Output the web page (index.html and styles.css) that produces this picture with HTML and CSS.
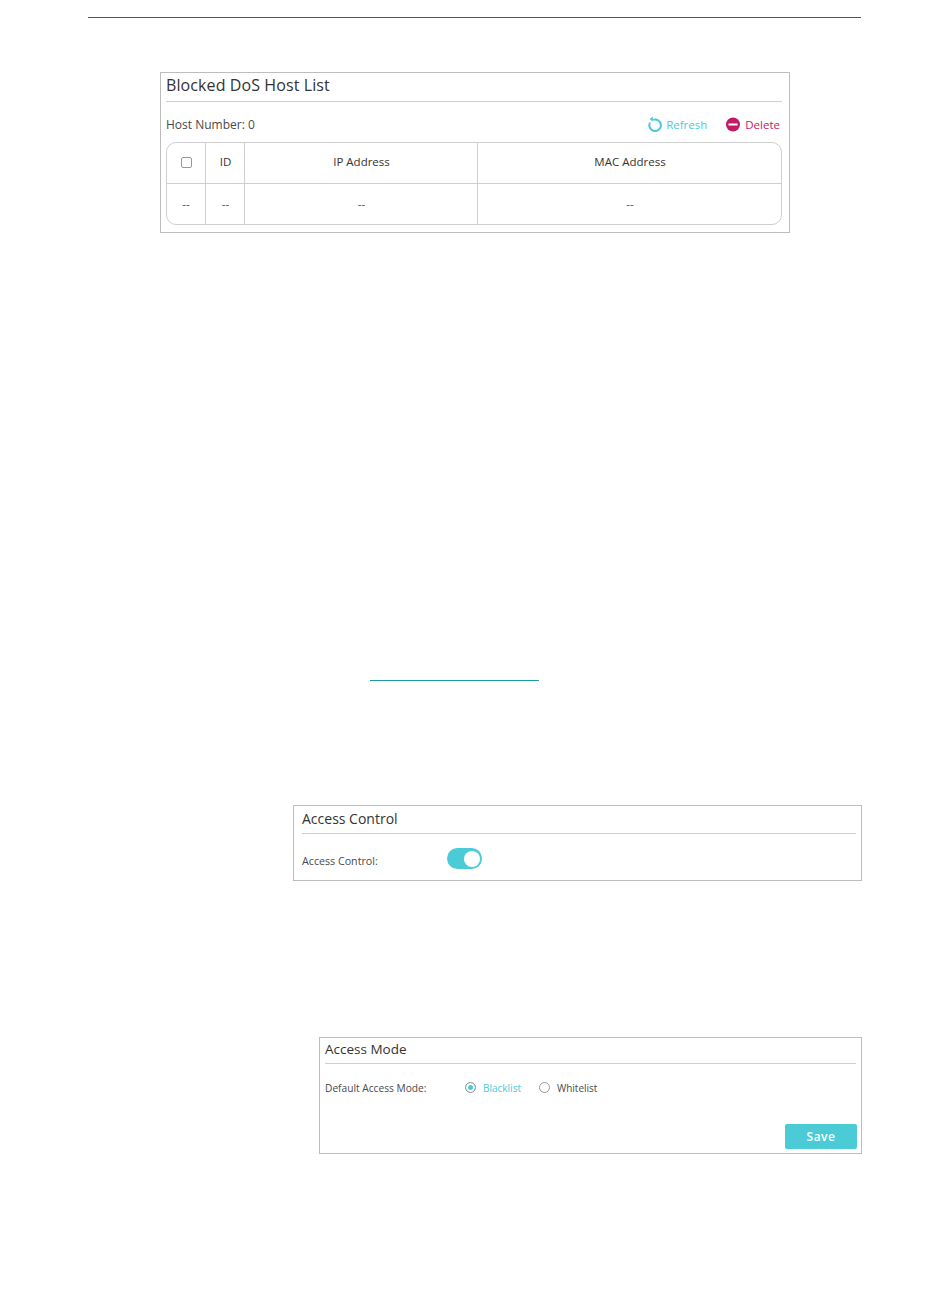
FILE: index.html
```html
<!DOCTYPE html>
<html>
<head>
    <title>Blocked DoS Host List</title>
    <link rel="stylesheet" href="styles.css">
</head>
<body>
    <div class="page-rule"></div>

    <div class="panel panel-hosts">
        <div class="panel-title">Blocked DoS Host List</div>
        <div class="toolbar">
            <span class="host-number">Host Number: 0</span>
            <div class="actions">
                <span class="action refresh">
                    <svg width="14" height="16" viewBox="0 0 14 16">
                        <path d="M5 3.9 A5.8 5.8 0 1 1 2 6.6" fill="none" stroke="#4acbd6" stroke-width="2"/>
                        <path d="M4.8 0.5 L4.8 5.5 L1.5 3 Z" fill="#4acbd6"/>
                    </svg>
                    Refresh
                </span>
                <span class="action delete">
                    <svg width="14" height="15" viewBox="0 0 14 15">
                        <circle cx="7" cy="7.5" r="7" fill="#c21b65"/>
                        <rect x="2.5" y="6.5" width="9" height="2" fill="#fff"/>
                    </svg>
                    Delete
                </span>
            </div>
        </div>
        <div class="table-wrap">
            <div class="row row-head">
                <div class="cell"><span class="checkbox"></span></div>
                <div class="cell">ID</div>
                <div class="cell">IP Address</div>
                <div class="cell">MAC Address</div>
            </div>
            <div class="row">
                <div class="cell">--</div>
                <div class="cell">--</div>
                <div class="cell">--</div>
                <div class="cell">--</div>
            </div>
        </div>
    </div>

    <div class="link-rule"></div>

    <div class="panel panel-control">
        <div class="panel-title">Access Control</div>
        <div class="field">
            <span class="field-label">Access Control:</span>
            <span class="switch"><span class="knob"></span></span>
        </div>
    </div>

    <div class="panel panel-mode">
        <div class="panel-title">Access Mode</div>
        <div class="field">
            <span class="field-label">Default Access Mode:</span>
            <span class="radio radio-on"></span>
            <span class="radio-text on">Blacklist</span>
            <span class="radio"></span>
            <span class="radio-text">Whitelist</span>
        </div>
        <div class="btn-container">
            <button class="save-btn">Save</button>
        </div>
    </div>
</body>
</html>
```

FILE: styles.css
```css
body {
    margin: 0;
    padding: 17px 89px 0 88px;
    font-family: "Open Sans", Arial, sans-serif;
    font-size: 11.5px;
    color: #4a4a4a;
    background: #fff;
}
.page-rule {
    height: 1px;
    background-color: #555;
}
.panel {
    border: 1px solid #bdbdbd;
    box-sizing: border-box;
}
.panel-title {
    color: #333;
    border-bottom: 1px solid #cfcfcf;
    box-sizing: border-box;
}
.panel-hosts {
    margin: 54px 71px 0 72px;
    height: 161px;
    padding: 0 7px 0 5px;
}
.panel-hosts .panel-title {
    font-size: 16px;
    letter-spacing: 0.1px;
    height: 29px;
    line-height: 24px;
}
.toolbar {
    display: flex;
    justify-content: space-between;
    align-items: center;
    height: 40px;
    padding: 4px 2px 0 0;
    box-sizing: border-box;
}
.host-number {
    font-size: 12px;
    margin-top: 1px;
}
.actions {
    display: flex;
    gap: 19px;
}
.action {
    display: flex;
    align-items: center;
    gap: 5px;
}
.delete {
    color: #c21b65;
}
.refresh {
    gap: 4px;
    color: #4acbd6;
}
.table-wrap {
    border: 1px solid #cfcfcf;
    border-radius: 10px;
    height: 83px;
    box-sizing: border-box;
}
.row {
    display: grid;
    grid-template-columns: 38px 39px 233px 1fr;
    height: 40px;
    text-align: center;
}
.row-head {
    height: 41px;
    box-sizing: border-box;
    border-bottom: 1px solid #cfcfcf;
    color: #333;
}
.cell {
    display: flex;
    align-items: center;
    justify-content: center;
    padding: 0 0 2px 1px;
    border-left: 1px solid #cfcfcf;
}
.cell:first-child {
    border-left: none;
    padding-left: 0;
}
.row-head .cell {
    padding-bottom: 3px;
}
.row-head .cell:first-child {
    padding-bottom: 2px;
}
.checkbox {
    width: 11px;
    height: 11px;
    box-sizing: border-box;
    border: 1px solid #999;
    border-radius: 2px;
}
.link-rule {
    width: 169px;
    height: 1px;
    margin: 447px 0 0 282px;
    background-color: #1c9a9e;
}
.panel-control {
    margin: 124px -1px 0 205px;
    height: 76px;
    padding: 0 5px 0 8px;
}
.panel-control .panel-title {
    font-size: 14px;
    height: 28px;
    line-height: 26px;
}
.panel-control .field {
    height: 47px;
    padding-top: 6px;
    box-sizing: border-box;
}
.panel-control .field-label {
    font-size: 10.7px;
    width: 145px;
}
.field {
    display: flex;
    align-items: center;
}
.field-label {
    font-size: 10.2px;
}
.switch {
    display: flex;
    align-items: center;
    justify-content: flex-end;
    width: 35px;
    height: 21px;
    padding-right: 2px;
    box-sizing: border-box;
    margin-top: -4px;
    border-radius: 11px;
    background-color: #4acbd6;
}
.knob {
    width: 16px;
    height: 16px;
    border-radius: 50%;
    background-color: #fff;
}
.panel-mode {
    margin: 156px -1px 0 231px;
    height: 117px;
    padding: 0 5px 0 5px;
}
.panel-mode .panel-title {
    font-size: 13.5px;
    height: 26px;
    line-height: 23px;
}
.panel-mode .field {
    height: 47px;
}
.panel-mode .field-label {
    width: 140px;
}
.radio {
    width: 9px;
    height: 9px;
    border: 1px solid #9a9a9a;
    border-radius: 50%;
    margin-right: 7px;
}
.radio-on {
    background-color: #4acbd6;
    box-shadow: inset 0 0 0 2px #fff;
}
.radio-text {
    font-size: 10px;
    margin-right: 18px;
}
.radio-text.on {
    color: #4acbd6;
}
.btn-container {
    display: flex;
    justify-content: flex-end;
    margin: 13px -1px 0 0;
}
.save-btn {
    width: 72px;
    height: 25px;
    border: none;
    border-radius: 2px;
    background-color: #4acbd6;
    color: #fff;
    font-family: inherit;
    font-size: 12px;
    font-weight: 600;
    letter-spacing: 0.5px;
}
```
